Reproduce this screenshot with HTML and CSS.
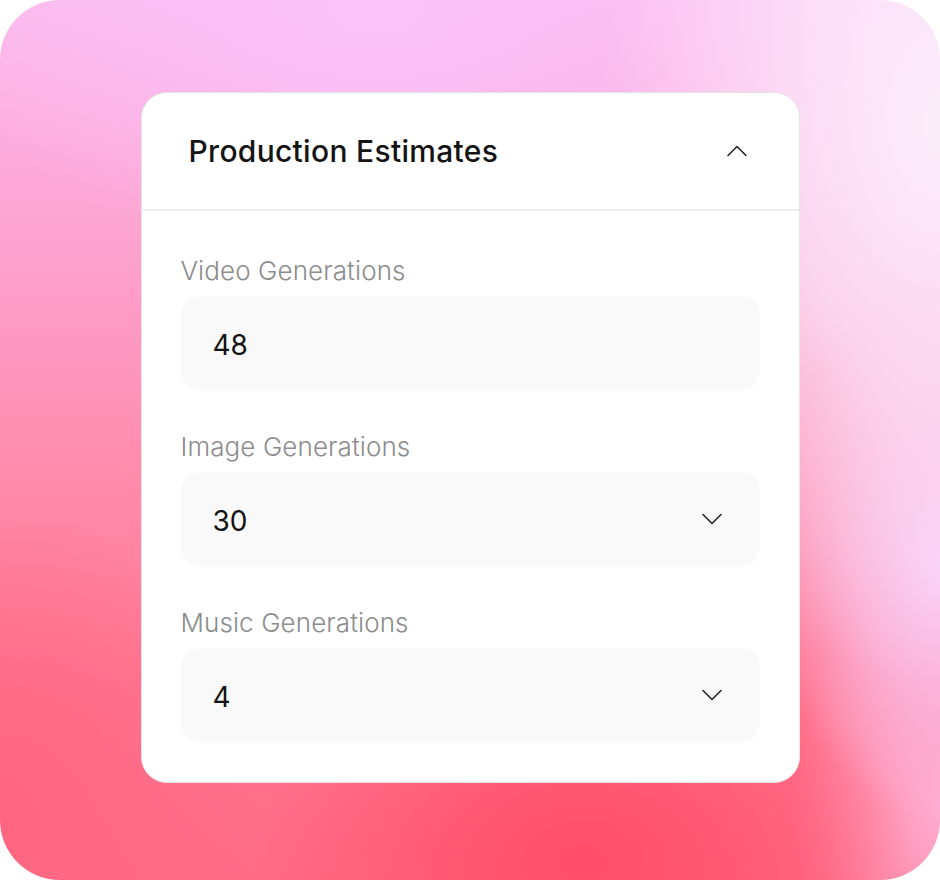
FILE: index.html
```html
<!DOCTYPE html>
<html lang="en">
<head>
<meta charset="utf-8">
<title>Production Estimates</title>
<link rel="stylesheet" href="styles.css">
</head>
<body>
<div class="frame">
  <section class="card">
    <header class="card-header">
      <h2 class="card-title">Production Estimates</h2>
      <svg class="chevron chevron-up" viewBox="0 0 24 24" width="24" height="24" aria-hidden="true">
        <path d="M3 16.5L12 7.5L21 16.5" />
      </svg>
    </header>
    <div class="card-body">
      <div class="field-group">
        <label class="field-label">Video Generations</label>
        <div class="field">
          <span class="field-value">48</span>
        </div>
      </div>
      <div class="field-group">
        <label class="field-label">Image Generations</label>
        <div class="field">
          <span class="field-value">30</span>
          <svg class="chevron" viewBox="0 0 24 24" width="24" height="24" aria-hidden="true">
            <path d="M3 7.5L12 16.5L21 7.5" />
          </svg>
        </div>
      </div>
      <div class="field-group">
        <label class="field-label">Music Generations</label>
        <div class="field">
          <span class="field-value">4</span>
          <svg class="chevron" viewBox="0 0 24 24" width="24" height="24" aria-hidden="true">
            <path d="M3 7.5L12 16.5L21 7.5" />
          </svg>
        </div>
      </div>
    </div>
  </section>
</div>
</body>
</html>
```
FILE: styles.css
```css
* {
  box-sizing: border-box;
}

html,
body {
  margin: 0;
  padding: 0;
  background: #ffffff;
}

body {
  font-family: "Inter", "Noto Sans", sans-serif;
  color: #161616;
}

.frame {
  width: 940px;
  height: 880px;
  border-radius: 60px;
  overflow: hidden;
  display: flex;
  justify-content: center;
  align-items: flex-start;
  padding-top: 92px;
  background:
    radial-gradient(ellipse 340px 560px at 100% 14%, rgba(251, 238, 251, 1) 0%, rgba(251, 232, 251, 0.75) 45%, rgba(251, 226, 251, 0) 100%),
    radial-gradient(ellipse 430px 250px at 40% 2%, rgba(250, 196, 252, 0.95) 0%, rgba(250, 196, 252, 0) 100%),
    radial-gradient(ellipse 170px 260px at 100% 64%, rgba(249, 204, 246, 1) 0%, rgba(249, 200, 242, 0.6) 50%, rgba(249, 200, 242, 0) 100%),
    radial-gradient(ellipse 330px 230px at 62% 98%, rgba(255, 76, 104, 1) 0%, rgba(255, 82, 110, 0.7) 45%, rgba(255, 90, 118, 0) 100%),
    radial-gradient(ellipse 260px 300px at 0% 92%, rgba(255, 100, 128, 0.9) 0%, rgba(255, 100, 128, 0) 100%),
    radial-gradient(ellipse 150px 240px at 100% 92%, rgba(255, 172, 208, 1) 0%, rgba(255, 172, 208, 0) 100%),
    linear-gradient(180deg, #fcbcee 0%, #fda2cf 28%, #ff8aab 55%, #ff7590 80%, #ff6c86 100%);
}

.card {
  width: 659px;
  background: #ffffff;
  border: 1.5px solid #e6e4e6;
  border-radius: 26px;
  overflow: hidden;
}

.card-header {
  height: 118px;
  display: flex;
  align-items: center;
  justify-content: space-between;
  padding: 0 50px 0 47px;
  border-bottom: 2px solid #ececec;
}

.card-title {
  margin: 0;
  font-size: 30px;
  font-weight: 500;
  letter-spacing: 0.3px;
  color: #141414;
}

.chevron {
  width: 24px;
  height: 24px;
  flex: none;
}

.chevron path {
  fill: none;
  stroke: #1e1e1e;
  stroke-width: 1.5;
  stroke-linecap: round;
  stroke-linejoin: round;
}

.card-body {
  display: flex;
  flex-direction: column;
  gap: 42px;
  padding: 45px 39px 40px;
}

.field-group {
  display: flex;
  flex-direction: column;
  gap: 10px;
}

.field-label {
  font-size: 26px;
  line-height: 30px;
  font-weight: 300;
  letter-spacing: 0.1px;
  color: #8c8c8c;
}

.field {
  height: 94px;
  border-radius: 20px;
  background: #f9f9f9;
  box-shadow: 0 1px 3px rgba(0, 0, 0, 0.02);
  display: flex;
  align-items: center;
  justify-content: space-between;
  padding: 4px 36px 0 32px;
}

.field-value {
  font-size: 28px;
  font-weight: 400;
  color: #141414;
}

.field .chevron {
  margin-top: -4px;
}
```
